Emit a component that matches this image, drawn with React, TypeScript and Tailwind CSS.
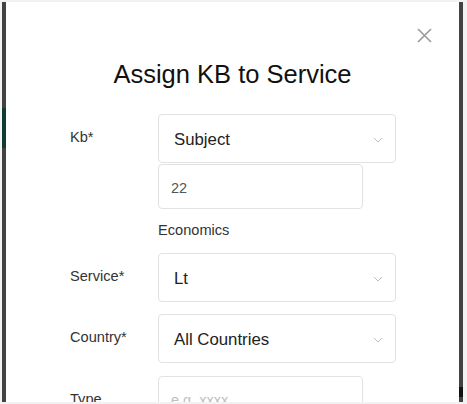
import React from "react";

function Chevron() {
  return (
    <svg width="10" height="6" viewBox="0 0 10 6" className="shrink-0">
      <polyline points="1,1 5,5 9,1" fill="none" stroke="#bdbdbd" strokeWidth="1" />
    </svg>
  );
}

function Select({ value }: { value: string }) {
  return (
    <div className="w-[238px] h-[49px] border border-[#e2e2e2] rounded-[4px] flex items-center justify-between pl-[15px] pr-[12px] pt-[2px] bg-white">
      <span className="text-[16.8px] leading-[24px] text-[#222]">{value}</span>
      <Chevron />
    </div>
  );
}

function Input({ value, placeholder }: { value?: string; placeholder?: string }) {
  return (
    <div className="w-[205px] h-[45px] border border-[#e2e2e2] rounded-[4px] flex items-center pl-[12px] pt-[3px] bg-white">
      {value ? (
        <span className="text-[14.5px] leading-[20px] text-[#555]">{value}</span>
      ) : (
        <span className="text-[14.5px] leading-[20px] text-[#c0c0c0]">{placeholder}</span>
      )}
    </div>
  );
}

function Row({ label, children, className = "" }: { label: string; children: React.ReactNode; className?: string }) {
  return (
    <div className={"flex " + className}>
      <div className="w-[152px] pl-[64px] pt-[13px] text-[14.6px] leading-[20px] text-[#333] shrink-0">{label}</div>
      <div className="flex flex-col">{children}</div>
    </div>
  );
}

export default function App() {
  return (
    <div
      className="w-[467px] h-[404px] bg-[#f2f2f2] overflow-hidden pt-[2px] pl-[2px]"
      style={{ fontFamily: '"Liberation Sans", Arial, Helvetica, sans-serif' }}
    >
      <div className="flex h-[400px]">
        <div className="w-[4px] bg-[#424242] flex flex-col">
          <div className="h-[106px]" />
          <div className="h-[40px] bg-[#0f3b31]" />
        </div>
        <div className="w-[453px] h-[400px] bg-white relative overflow-hidden">
          <button className="absolute left-[411px] top-[26px] w-[15px] h-[15px] flex items-center justify-center">
            <svg width="15" height="15" viewBox="0 0 15 15">
              <path d="M1 1 L14 14 M14 1 L1 14" stroke="#9a9a9a" strokeWidth="1.6" fill="none" />
            </svg>
          </button>
          <h1 className="mt-[57px] text-center text-[25.5px] leading-[30px] text-[#111] font-normal">
            Assign KB to Service
          </h1>
          <div className="flex flex-col mt-[25px]">
            <Row label="Kb*">
              <Select value="Subject" />
              <div className="mt-[1px]">
                <Input value="22" />
              </div>
              <div className="mt-[11px] text-[14.6px] leading-[20px] text-[#333]">Economics</div>
            </Row>
            <Row label="Service*" className="mt-[13px]">
              <Select value="Lt" />
            </Row>
            <Row label="Country*" className="mt-[12px]">
              <Select value="All Countries" />
            </Row>
            <Row label="Type" className="mt-[13px]">
              <Input placeholder="e.g. xxxx" />
            </Row>
          </div>
        </div>
        <div className="w-[4px] bg-[#424242] flex flex-col">
          <div className="h-[385px]" />
          <div className="h-[10px] bg-[#111]" />
        </div>
      </div>
    </div>
  );
}
